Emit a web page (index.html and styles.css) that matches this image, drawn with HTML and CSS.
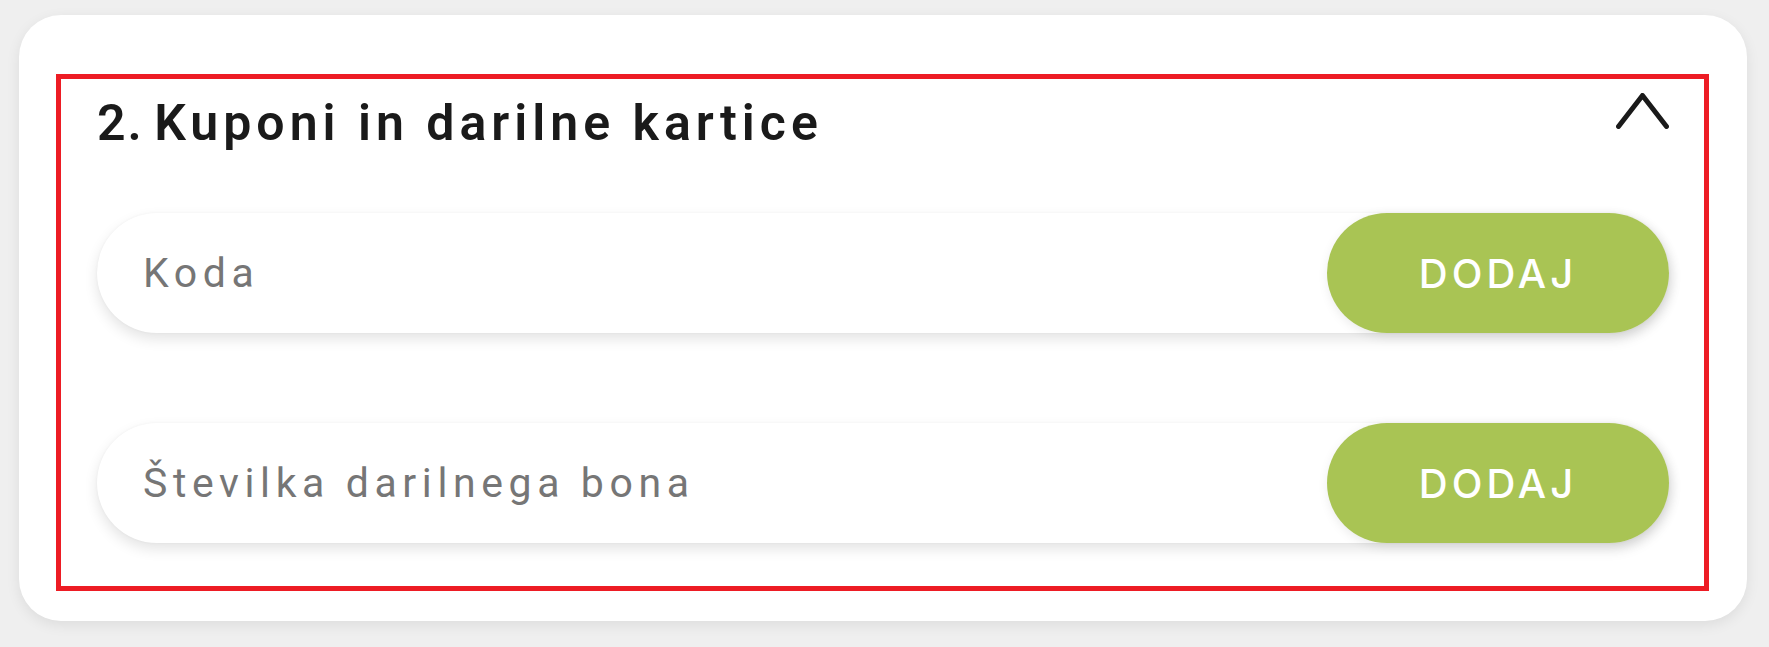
FILE: index.html
```html
<!DOCTYPE html>
<html lang="sl">
<head>
<meta charset="utf-8">
<title>Kuponi in darilne kartice</title>
<link rel="stylesheet" href="styles.css">
</head>
<body>
  <div class="card">
    <section class="coupons">
      <div class="head">
        <h2 class="title"><span class="num">2. </span>Kuponi in darilne kartice</h2>
        <button class="toggle" type="button" aria-label="Skrij">
          <svg width="53" height="36" viewBox="0 0 53 36" fill="none">
            <polyline points="2.5,33.5 26.5,2.5 50.5,33.5" stroke="#1a1a1a" stroke-width="5" stroke-linecap="round" stroke-linejoin="round"/>
          </svg>
        </button>
      </div>
      <div class="fields">
        <form class="row">
          <input class="field" type="text" placeholder="Koda">
          <button class="add" type="button">DODAJ</button>
        </form>
        <form class="row">
          <input class="field" type="text" placeholder="Številka darilnega bona">
          <button class="add" type="button">DODAJ</button>
        </form>
      </div>
    </section>
  </div>
</body>
</html>
```
FILE: styles.css
```css
html, body {
  margin: 0;
}
body {
  background: #efefef;
  padding: 15px 22px 26px 19px;
  font-family: Inter, "Noto Sans", "Liberation Sans", sans-serif;
}
.card {
  background: #fff;
  border-radius: 42px;
  padding: 59px 38px 30px 37px;
  box-shadow: 0 4px 14px rgba(0, 0, 0, 0.08);
}
.coupons {
  border: 5px solid #ed1c24;
  padding: 15px 35px 43px 36px;
}
.head {
  display: flex;
  justify-content: space-between;
  align-items: flex-start;
}
.title {
  margin: 0;
  font-family: Roboto, "Noto Sans", "Liberation Sans", sans-serif;
  font-size: 50px;
  font-weight: 600;
  line-height: 59px;
  letter-spacing: 5px;
  color: #1a1a1a;
}
.num {
  letter-spacing: 2px;
  word-spacing: -4px;
}
.toggle {
  border: 0;
  background: none;
  padding: 0;
  width: 53px;
  height: 36px;
  margin-top: -1px;
  display: block;
  cursor: pointer;
}
.toggle svg {
  display: block;
}
.fields {
  margin-top: 60px;
  display: flex;
  flex-direction: column;
  gap: 90px;
}
.row {
  margin: 0;
  display: flex;
  height: 120px;
  border-radius: 60px;
  background: #fff;
  box-shadow: 0 6px 14px rgba(0, 0, 0, 0.11), 0 0 3px rgba(0, 0, 0, 0.04);
}
.field {
  flex: 1;
  min-width: 0;
  border: 0;
  outline: none;
  background: transparent;
  padding: 0 0 0 46px;
  font-family: Roboto, "Noto Sans", "Liberation Sans", sans-serif;
  font-size: 41px;
  font-weight: 400;
  letter-spacing: 5.6px;
  color: #333;
}
.field::placeholder {
  color: #767676;
}
.add {
  width: 342px;
  height: 120px;
  border: 0;
  border-radius: 60px;
  background: #a9c454;
  color: #fff;
  font-family: Inter, "Noto Sans", "Liberation Sans", sans-serif;
  font-size: 40px;
  font-weight: 500;
  letter-spacing: 4px;
  box-shadow: 2px 3px 12px rgba(0, 0, 0, 0.1);
  cursor: pointer;
}
```
